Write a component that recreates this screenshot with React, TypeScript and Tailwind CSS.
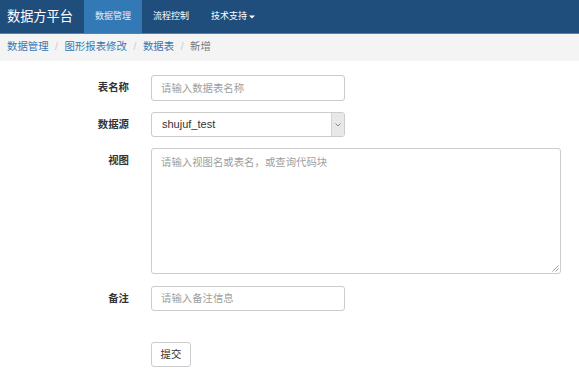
import React from "react";

export default function App() {
  return (
    <div className="w-[579px] h-[374px] bg-white overflow-hidden font-['Liberation_Sans','Noto_Sans_CJK_SC',sans-serif] text-[#333]">
      {/* Navbar */}
      <div className="h-[34px] bg-[#1f4e7d] border-b border-[#5d7fa2] flex items-stretch">
        <div className="pl-[7px] pr-[11px] flex items-center text-white text-[13.2px] leading-none">数据方平台</div>
        <div className="px-[11px] bg-[#3279b5] flex items-center text-[#e6eef6] text-[9px] leading-none">数据管理</div>
        <div className="px-[11px] flex items-center text-white text-[9px] leading-none">流程控制</div>
        <div className="px-[11px] flex items-center text-white text-[9px] leading-none">
          技术支持
          <svg width="6" height="4" viewBox="0 0 6 4" className="ml-[2px]">
            <path d="M0 0.5 L6 0.5 L3 3.5 Z" fill="#ffffff" />
          </svg>
        </div>
      </div>

      {/* Breadcrumb */}
      <div className="h-[27px] bg-[#f4f4f4] pl-[7px] flex items-center text-[10.4px] leading-none">
        <span className="text-[#3578b4]">数据管理</span>
        <span className="w-[16px] text-center text-[#cccccc]">/</span>
        <span className="text-[#3578b4]">图形报表修改</span>
        <span className="w-[16px] text-center text-[#cccccc]">/</span>
        <span className="text-[#3578b4]">数据表</span>
        <span className="w-[16px] text-center text-[#cccccc]">/</span>
        <span className="text-[#777777]">新增</span>
      </div>

      {/* Form */}
      <div className="pt-[14px] flex flex-col">
        <div className="flex">
          <div className="w-[129px] text-right pt-[6px] text-[10.4px] leading-[14px] font-bold text-[#333]">表名称</div>
          <input
            className="ml-[22px] w-[194px] h-[26px] border border-[#cccccc] rounded-[3px] px-[9px] text-[10.4px] text-[#555] placeholder:text-[#a0a0a0] outline-none"
            placeholder="请输入数据表名称"
          />
        </div>
        <div className="flex mt-[11px]">
          <div className="w-[129px] text-right pt-[6px] text-[10.4px] leading-[14px] font-bold text-[#333]">数据源</div>
          <div className="ml-[22px] w-[194px] h-[25px] border border-[#cccccc] rounded-[3px] flex items-stretch overflow-hidden">
            <div className="flex-1 pl-[10px] flex items-center text-[11px] text-[#333]">shujuf_test</div>
            <div className="w-[13px] bg-[#e8e8e8] border-l border-[#d4d4d4] flex items-center justify-center">
              <svg width="6" height="4" viewBox="0 0 6 4">
                <path d="M0.5 0.5 L3 3 L5.5 0.5" fill="none" stroke="#888" strokeWidth="1" />
              </svg>
            </div>
          </div>
        </div>
        <div className="flex mt-[11px]">
          <div className="w-[129px] text-right pt-[6px] text-[10.4px] leading-[14px] font-bold text-[#333]">视图</div>
          <div className="ml-[22px] relative w-[410px] h-[126px]">
            <textarea
              className="w-full h-full border border-[#cccccc] rounded-[3px] px-[9px] py-[6px] text-[10.4px] leading-[15px] text-[#555] placeholder:text-[#a0a0a0] outline-none resize-none block"
              placeholder="请输入视图名或表名，或查询代码块"
            />
            <svg width="7" height="7" viewBox="0 0 7 7" className="absolute right-[2px] bottom-[2px]">
              <path d="M6.5 0.5 L0.5 6.5 M6.5 3.5 L3.5 6.5" stroke="#9a9a9a" strokeWidth="1" fill="none" />
            </svg>
          </div>
        </div>
        <div className="flex mt-[12px]">
          <div className="w-[129px] text-right pt-[6px] text-[10.4px] leading-[14px] font-bold text-[#333]">备注</div>
          <input
            className="ml-[22px] w-[194px] h-[25px] border border-[#cccccc] rounded-[3px] px-[9px] text-[10.4px] text-[#555] placeholder:text-[#a0a0a0] outline-none"
            placeholder="请输入备注信息"
          />
        </div>
        <div className="flex mt-[31px]">
          <div className="w-[129px]" />
          <button className="ml-[22px] w-[40px] h-[25px] border border-[#cccccc] rounded-[3px] bg-white text-[10.4px] text-[#333] flex items-center justify-center">
            提交
          </button>
        </div>
      </div>
    </div>
  );
}
